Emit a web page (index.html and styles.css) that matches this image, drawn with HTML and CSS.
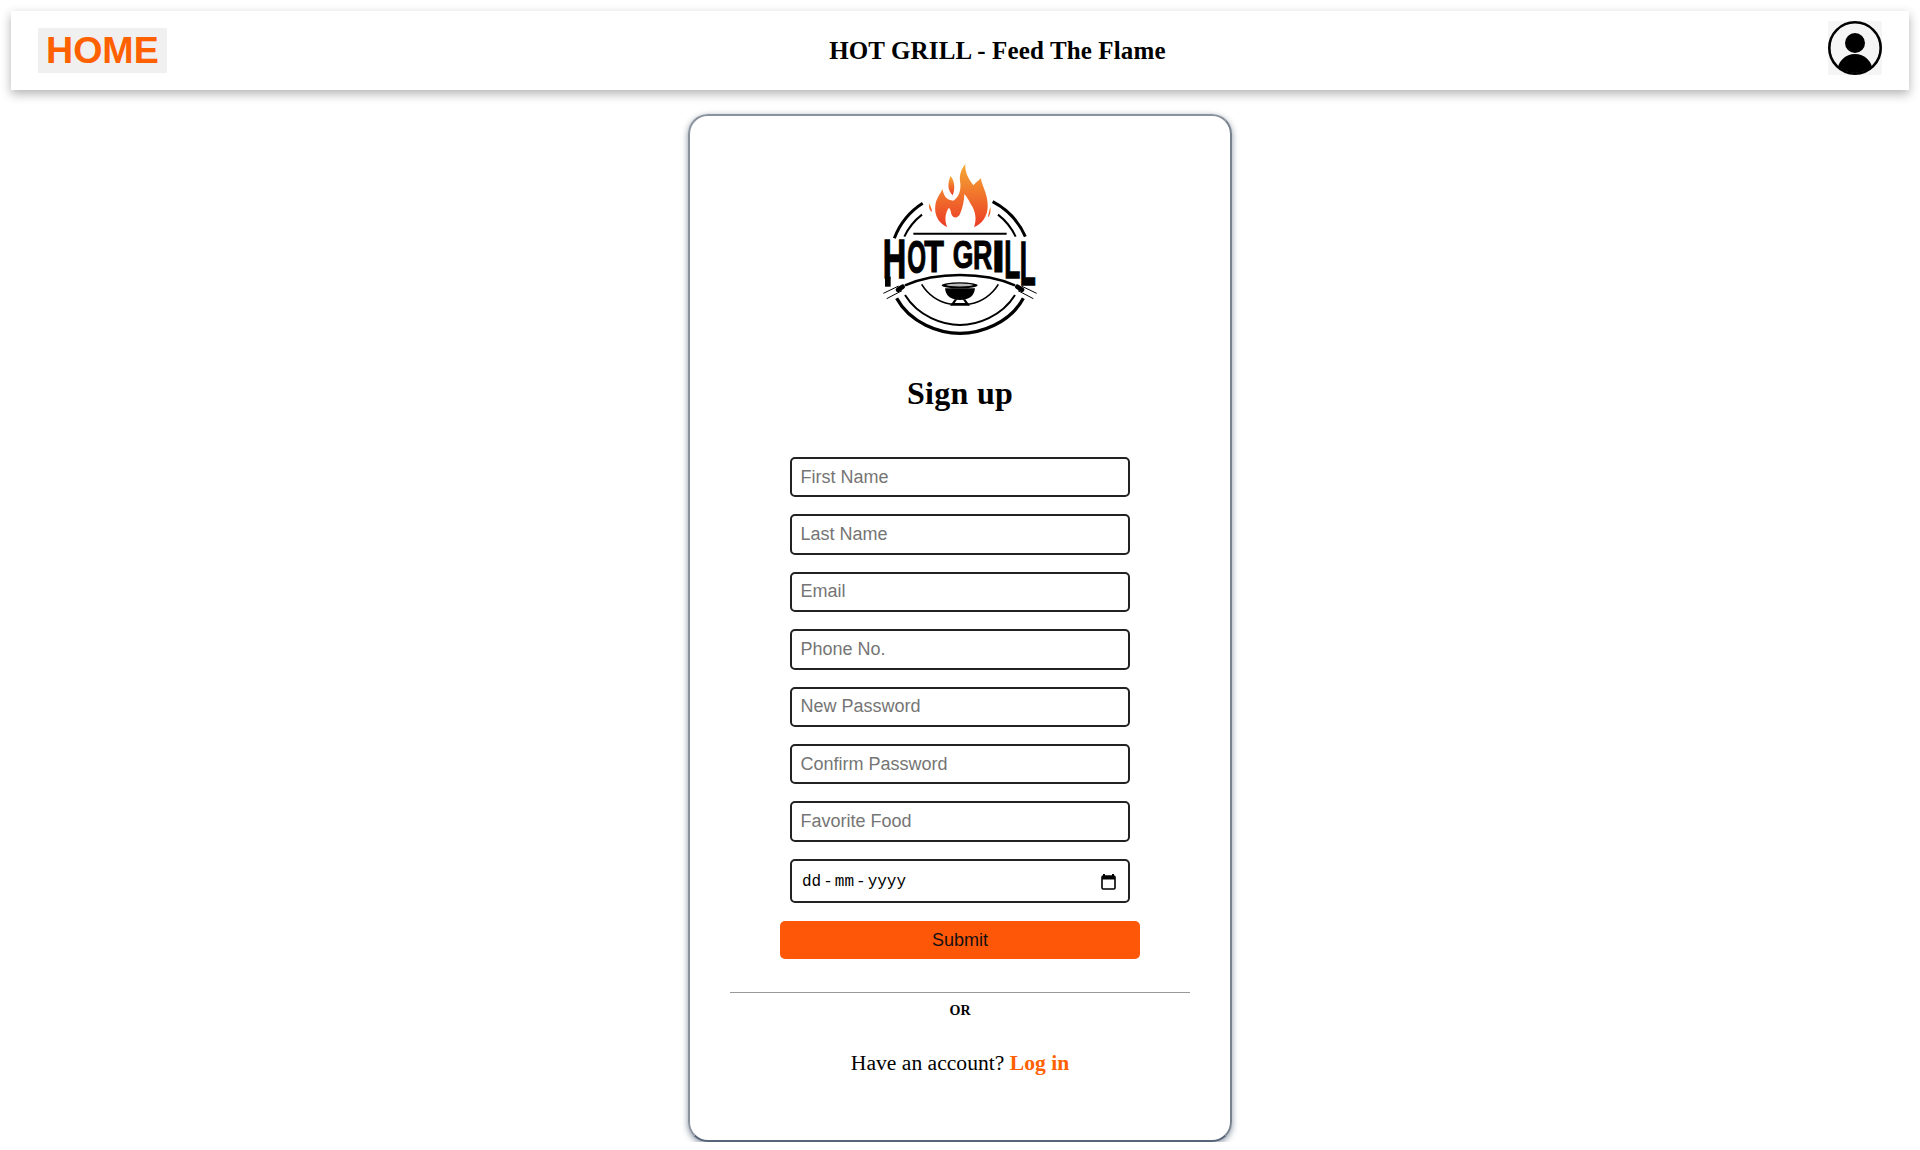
FILE: index.html
```html
<!DOCTYPE html>
<html lang="en">
<head>
    <meta charset="UTF-8">
    <title>Hot Grill - Sign up</title>
    <link rel="stylesheet" href="styles.css">
</head>
<body>

    <nav class="navbar">
        <a class="home-link">HOME</a>
        <h2 class="nav-title">HOT GRILL - Feed The Flame</h2>
        <svg class="user-icon" viewBox="0 0 54 54">
            <defs>
                <clipPath id="userClip"><circle cx="27" cy="27" r="25"/></clipPath>
            </defs>
            <rect width="54" height="54" rx="2" fill="#f5f5f5"/>
            <circle cx="27" cy="27" r="25.7" fill="none" stroke="#000" stroke-width="2.6"/>
            <circle cx="27" cy="22" r="10"/>
            <ellipse cx="27" cy="50" rx="17.5" ry="17" clip-path="url(#userClip)"/>
        </svg>
    </nav>

    <main class="card">
        <svg class="logo" viewBox="0 0 600 630">
            <defs>
                <linearGradient id="flame" x1="0" y1="0" x2="0" y2="1">
                    <stop offset="0" stop-color="#f5aa33"/>
                    <stop offset="1" stop-color="#ec3b25"/>
                </linearGradient>
            </defs>
            <!-- flame -->
            <path fill="url(#flame)" d="M262 262 C236 250 222 226 226 196 C229 176 240 162 248 148 C250 168 262 182 280 182 C296 172 305 150 300 122 C298 102 305 86 316 72 C314 96 325 116 340 136 C348 128 356 122 362 115 C368 142 385 166 383 202 C382 230 366 252 342 262 C350 240 348 214 332 192 C326 180 320 170 313 162 C313 180 308 204 300 222 C294 236 278 236 274 222 C272 214 272 206 266 204 C254 222 254 244 262 262 Z"/>
            <path fill="url(#flame)" d="M272 108 C284 124 286 146 278 166 C262 150 262 130 272 108 Z"/>
            <path fill="url(#flame)" d="M207 190 C212 198 215 206 216 216 C209 212 205 202 207 190 Z"/>
            <path fill="url(#flame)" d="M391 200 C394 212 390 226 384 232 C385 222 388 210 391 200 Z"/>
            <!-- rings -->
            <g fill="none" stroke="#000">
                <path stroke-width="9" d="M188 190 A215 215 0 0 0 103 295"/>
                <path stroke-width="9" d="M398 185 A215 215 0 0 1 496 290"/>
                <path stroke-width="6" d="M186 224 A180 180 0 0 0 133 290"/>
                <path stroke-width="6" d="M414 224 A180 180 0 0 1 467 290"/>
                <path stroke-width="6" d="M160 281 H440"/>
                <path stroke-width="10" d="M110 475 C150 550 240 580 300 580 C360 580 450 550 490 475"/>
                <path stroke-width="6" d="M135 465 C175 530 250 555 300 555 C350 555 425 530 465 465"/>
                <path stroke-width="5" d="M185 433 C205 465 235 485 270 492 H330 C365 485 395 465 415 433"/>
                <path stroke-width="7" d="M135 436 C190 412 250 405 300 405 C350 405 410 412 465 436"/>
                <!-- tongs -->
                <path stroke-width="3" d="M70 460 L116 438 M80 476 L126 452"/>
                <path stroke-width="3" d="M530 460 L484 438 M520 476 L474 452"/>
                <path stroke-width="14" stroke-linecap="round" d="M114 449 L128 440"/>
                <path stroke-width="14" stroke-linecap="round" d="M486 449 L472 440"/>
            </g>
            <!-- grill -->
            <ellipse cx="299" cy="436" rx="54" ry="9" fill="#000"/>
            <ellipse cx="299" cy="435" rx="40" ry="4.5" fill="#bbb"/>
            <path d="M255 445 H345 C343 466 330 480 300 480 C270 480 257 466 255 445 Z"/>
            <path d="M284 478 L270 497 H330 L316 478 H308 L316 489 H284 L292 478 Z"/>
            <!-- name, one letter at a time because the letters follow the arc -->
            <g class="logo-letters">
                <text transform="translate(68 415) scale(.974 1.67)">H</text>
                <text transform="translate(142 400) scale(.725 1.38)">O</text>
                <text transform="translate(193 395) scale(.965 1.31)">T</text>
                <text transform="translate(278.5 385) scale(.797 1.16)">G</text>
                <text transform="translate(339 388) scale(.806 1.21)">R</text>
                <text transform="translate(395 395) scale(1.43 1.31)">I</text>
                <text transform="translate(432.5 415) scale(.784 1.6)">L</text>
                <text transform="translate(479.5 435) scale(.784 1.89)">L</text>
            </g>
            <rect x="75" y="410" width="17" height="30"/>
        </svg>

        <h1 class="card-title">Sign up</h1>

        <form class="signup-form">
            <input class="field" type="text" placeholder="First Name">
            <input class="field" type="text" placeholder="Last Name">
            <input class="field" type="email" placeholder="Email">
            <input class="field" type="text" placeholder="Phone No.">
            <input class="field" type="password" placeholder="New Password">
            <input class="field" type="password" placeholder="Confirm Password">
            <input class="field" type="text" placeholder="Favorite Food">
            <div class="field date-field">
                <span>dd</span><span class="date-sep">-</span><span>mm</span><span class="date-sep">-</span><span>yyyy</span>
                <svg class="date-icon" viewBox="0 0 15 16">
                    <path d="M3 0 V2 M12 0 V2" stroke="#000" stroke-width="2"/>
                    <rect x="1" y="2" width="13" height="13" rx="1.2" fill="none" stroke="#000" stroke-width="1.6"/>
                    <rect x="1" y="2" width="13" height="3.5" fill="#000"/>
                </svg>
            </div>
            <button class="submit-btn" type="button">Submit</button>
        </form>

        <hr class="divider">
        <p class="or-text">OR</p>
        <p class="login-text">Have an account? <a class="login-link">Log in</a></p>
    </main>

</body>
</html>
```

FILE: styles.css
```css
body {
    margin: 0;
    background: white;
    font-family: "Liberation Serif", serif;
}
.navbar {
    display: flex;
    align-items: center;
    justify-content: space-between;
    height: 79px;
    margin: 11px 11px 0;
    padding: 0 27px;
    background: white;
    box-shadow: 0 4px 10px rgba(0, 0, 0, 0.3);
}
.home-link {
    padding: 1px 8px;
    background: #f0f0f0;
    color: #ff6000;
    font-family: "Liberation Sans", sans-serif;
    font-size: 37.6px;
    font-weight: bold;
    line-height: 43px;
}
.nav-title {
    margin: 0;
    color: black;
    font-size: 25px;
    font-weight: bold;
    letter-spacing: 0.13px;
}
.user-icon {
    width: 54px;
    height: 54px;
    margin-top: -5px;
}
.card {
    box-sizing: border-box;
    width: 544px;
    height: 1028px;
    margin: 24px auto 0;
    padding-top: 24px;
    border: 2px solid #8a929e;
    border-right-color: #77818e;
    border-bottom-color: #56657a;
    border-radius: 20px;
    box-shadow: 0 2px 6px rgba(40, 60, 85, 0.55);
    text-align: center;
}
.logo {
    display: block;
    width: 200px;
    height: 210px;
    margin: 0 auto;
}
.logo-letters {
    font-family: "Liberation Sans", sans-serif;
    font-size: 100px;
    font-weight: bold;
    stroke: black;
    stroke-width: 2.5px;
}
.card-title {
    margin: 22px 0 43px;
    font-size: 32px;
    letter-spacing: 0.3px;
    line-height: 42px;
}
.signup-form {
    display: flex;
    flex-direction: column;
    align-items: center;
    gap: 17px;
}
.field {
    box-sizing: border-box;
    width: 340px;
    height: 40.4px;
    padding: 0 8.5px;
    border: 2px solid #222;
    border-radius: 5px;
    background: white;
    font-family: "Liberation Sans", sans-serif;
    font-size: 18px;
}
.date-field {
    display: flex;
    align-items: center;
    gap: 2px;
    height: 44px;
    margin-bottom: 1.5px;
    padding: 2px 10px 0;
    font-family: "Liberation Mono", monospace;
    font-size: 16px;
}
.date-icon {
    width: 15px;
    height: 16px;
    margin-left: auto;
    margin-right: 2px;
}
.submit-btn {
    width: 360px;
    height: 38px;
    border: none;
    border-radius: 5px;
    background: #ff5708;
    color: #111;
    font-family: "Liberation Sans", sans-serif;
    font-size: 18px;
}
.divider {
    width: 460px;
    margin: 33px auto 0;
    border: none;
    border-top: 1px solid #999;
}
.or-text {
    margin: 10px 0 0;
    font-size: 14px;
    font-weight: bold;
}
.login-text {
    margin: 32px 0 0;
    font-size: 21.6px;
}
.login-link {
    color: #ff6000;
    font-weight: bold;
}
```
